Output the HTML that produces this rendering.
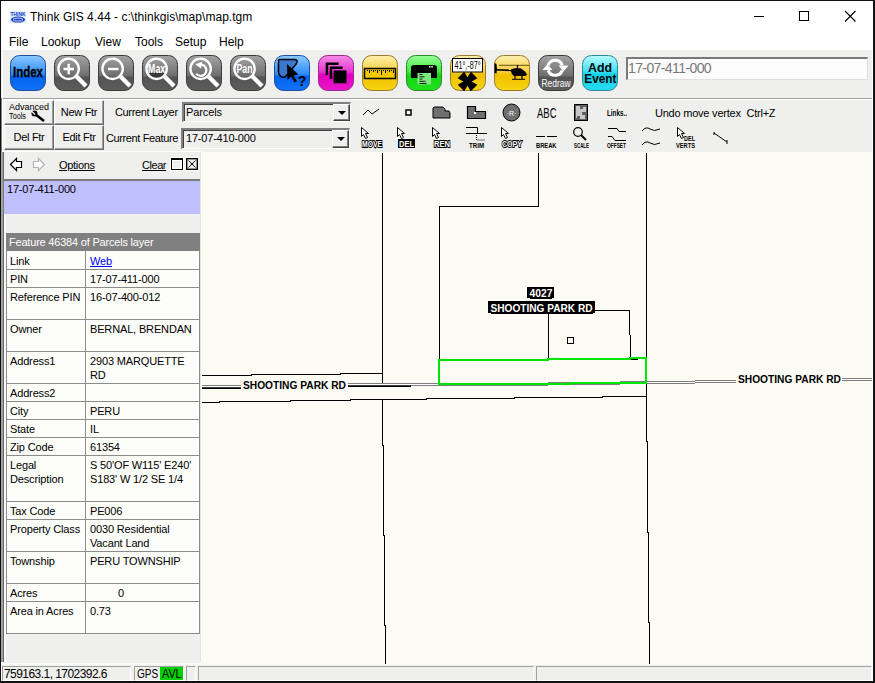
<!DOCTYPE html>
<html><head><meta charset="utf-8">
<style>
*{margin:0;padding:0;box-sizing:border-box}
html,body{width:875px;height:683px;overflow:hidden;background:#fff;font-family:"Liberation Sans",sans-serif;color:#000}
.a{position:absolute}
.t{position:absolute;white-space:nowrap;font-size:12px;line-height:14px}
.s{position:absolute;white-space:nowrap;font-size:11px;line-height:14px}
.btn{position:absolute;background:#eff0ee;border-top:1px solid #fff;border-left:1px solid #fff;border-right:1px solid #696969;border-bottom:1px solid #696969;box-shadow:inset -1px -1px 0 #a0a0a0;font-size:11px;line-height:14px;text-align:center;white-space:nowrap}
.combo{position:absolute;background:#eff0ee;border-top:2px solid #808080;border-left:2px solid #808080;border-right:1px solid #fff;border-bottom:1px solid #fff;box-shadow:inset 1px 1px 0 #404040}
.dd{position:absolute;right:0px;top:0px;width:17px;bottom:0px;background:#eff0ee;border-top:1px solid #fff;border-left:1px solid #fff;border-right:1px solid #404040;border-bottom:1px solid #404040;box-shadow:inset -1px -1px 0 #808080}
.dd:after{content:"";position:absolute;left:4px;top:6px;border-left:4px solid transparent;border-right:4px solid transparent;border-top:4px solid #000}
.tb{position:absolute;left:6px;top:233px;width:194px;border-collapse:collapse;font-size:11px;line-height:14px;background:#fdfdf9}
.tb td{border:1px solid #8c8c8c;vertical-align:top;padding:2px 0 0 3px;white-space:nowrap}
.tb td.c1{width:79px}
.ico{position:absolute}
</style></head><body>
<!-- window frame -->
<div class="a" style="left:0;top:0;width:875px;height:683px;background:#fff"></div>
<div class="a" style="left:0;top:0;width:875px;height:1px;background:#111"></div>
<div class="a" style="left:0;top:0;width:1px;height:683px;background:#111"></div>
<div class="a" style="left:873px;top:0;width:2px;height:683px;background:#111"></div>
<div class="a" style="left:0;top:681px;width:875px;height:2px;background:#111"></div>
<!-- title -->
<svg class="a" style="left:10px;top:11px" width="16" height="12"><rect width="16" height="12" fill="#d8ecfa"/><text x="8" y="5" font-family="Liberation Sans" font-weight="bold" font-size="5.5" text-anchor="middle" fill="#1a3cc8" textLength="15" lengthAdjust="spacingAndGlyphs">THINK</text><ellipse cx="8" cy="8.6" rx="7" ry="3" fill="#1a3cc8"/><ellipse cx="8" cy="8.6" rx="5" ry="1.5" fill="none" stroke="#fff" stroke-width="0.8"/></svg>
<div class="t" style="left:30px;top:10px;letter-spacing:0.04px">Think GIS 4.44 - c:\thinkgis\map\map.tgm</div>
<div class="a" style="left:754px;top:16px;width:10px;height:1px;background:#000"></div>
<div class="a" style="left:799px;top:11px;width:10px;height:10px;border:1px solid #000"></div>
<svg class="a" style="left:844px;top:10px" width="13" height="13"><path d="M1 1L11.5 11.5M11.5 1L1 11.5" stroke="#000" stroke-width="1.1"/></svg>
<!-- menu -->
<div class="t" style="left:9px;top:35px">File</div>
<div class="t" style="left:41px;top:35px">Lookup</div>
<div class="t" style="left:95px;top:35px">View</div>
<div class="t" style="left:135px;top:35px">Tools</div>
<div class="t" style="left:175px;top:35px">Setup</div>
<div class="t" style="left:219px;top:35px">Help</div>
<!-- toolbar bg -->
<div class="a" style="left:1px;top:50px;width:872px;height:48px;background:#eff0ee"></div>
<div class="a" style="left:1px;top:98px;width:872px;height:1px;background:#a0a0a0"></div>
<div class="a" style="left:1px;top:99px;width:872px;height:1px;background:#fff"></div>
<div class="a" style="left:1px;top:100px;width:872px;height:52px;background:#eff0ee"></div>
<div class="a" style="left:1px;top:98px;width:1px;height:54px;background:#808080"></div><div class="a" style="left:2px;top:50px;width:1px;height:100px;background:#fff"></div>
<!-- search box -->
<div class="a" style="left:626px;top:57px;width:242px;height:23px;background:#fcfcfc;border-top:2px solid #7a7a7a;border-left:2px solid #7a7a7a;border-bottom:1px solid #e0e0e0;border-right:1px solid #e0e0e0"></div>
<div class="a" style="left:628px;top:60px;font-size:14px;line-height:16px;color:#787878;white-space:nowrap;letter-spacing:-0.6px">17-07-411-000</div>
<svg class="a" style="left:0;top:0" width="875" height="100"><defs><linearGradient id="gg" x1="0" y1="0" x2="0" y2="1"><stop offset="0" stop-color="#a4a4a4"/><stop offset="0.58" stop-color="#6e6e6e"/><stop offset="0.62" stop-color="#545454"/><stop offset="1" stop-color="#5c5c5c"/></linearGradient><linearGradient id="gb" x1="0" y1="0" x2="0" y2="1"><stop offset="0" stop-color="#8ccaff"/><stop offset="0.55" stop-color="#2a88f8"/><stop offset="0.6" stop-color="#0062ee"/><stop offset="1" stop-color="#1272f8"/></linearGradient><linearGradient id="gm" x1="0" y1="0" x2="0" y2="1"><stop offset="0" stop-color="#f88ae8"/><stop offset="0.45" stop-color="#e838d0"/><stop offset="0.55" stop-color="#e000c0"/><stop offset="1" stop-color="#e818c8"/></linearGradient><linearGradient id="gy" x1="0" y1="0" x2="0" y2="1"><stop offset="0" stop-color="#fff0b0"/><stop offset="0.45" stop-color="#f8d040"/><stop offset="0.55" stop-color="#f0c000"/><stop offset="1" stop-color="#f8d410"/></linearGradient><linearGradient id="gr" x1="0" y1="0" x2="0" y2="1"><stop offset="0" stop-color="#98ff98"/><stop offset="0.45" stop-color="#40ee40"/><stop offset="0.55" stop-color="#10d810"/><stop offset="1" stop-color="#20e020"/></linearGradient><linearGradient id="gc" x1="0" y1="0" x2="0" y2="1"><stop offset="0" stop-color="#b8fcff"/><stop offset="0.45" stop-color="#40e0f4"/><stop offset="0.55" stop-color="#10d0e8"/><stop offset="1" stop-color="#28dcf0"/></linearGradient></defs><g transform="translate(10,55)"><rect x="0.5" y="0.5" width="35" height="35" rx="9" fill="url(#gb)" stroke="#1a4fa0"/><text x="18" y="21.8" font-family="Liberation Sans" font-weight="bold" font-size="14.5" text-anchor="middle" textLength="30" lengthAdjust="spacingAndGlyphs" stroke="#000" stroke-width="0.35">Index</text></g><g transform="translate(54,55)"><rect x="0.5" y="0.5" width="35" height="35" rx="9" fill="url(#gg)" stroke="#3a3a3a"/><circle cx="14.6" cy="13.8" r="10.2" fill="none" stroke="#fff" stroke-width="2.3"/><line x1="22.3" y1="21.3" x2="32" y2="31" stroke="#fff" stroke-width="4.3"/><path d="M9.5 14h10.5M14.7 8.7v10.5" stroke="#fff" stroke-width="2.4"/></g><g transform="translate(98,55)"><rect x="0.5" y="0.5" width="35" height="35" rx="9" fill="url(#gg)" stroke="#3a3a3a"/><circle cx="14.6" cy="13.8" r="10.2" fill="none" stroke="#fff" stroke-width="2.3"/><line x1="22.3" y1="21.3" x2="32" y2="31" stroke="#fff" stroke-width="4.3"/><path d="M10 14h10.5" stroke="#fff" stroke-width="2.4"/></g><g transform="translate(142,55)"><rect x="0.5" y="0.5" width="35" height="35" rx="9" fill="url(#gg)" stroke="#3a3a3a"/><path d="M6.2 17.5 A9 9 0 0 0 23 17.5 Z" fill="#3a3a3a"/><circle cx="14.6" cy="13.8" r="10.2" fill="none" stroke="#fff" stroke-width="2.3"/><line x1="22.3" y1="21.3" x2="32" y2="31" stroke="#fff" stroke-width="4.3"/><text x="14.6" y="18.3" fill="#fff" font-family="Liberation Sans" font-weight="bold" font-size="12" text-anchor="middle" textLength="17" lengthAdjust="spacingAndGlyphs">Max</text></g><g transform="translate(186,55)"><rect x="0.5" y="0.5" width="35" height="35" rx="9" fill="url(#gg)" stroke="#3a3a3a"/><circle cx="14.6" cy="13.8" r="10.2" fill="none" stroke="#fff" stroke-width="2.3"/><line x1="22.3" y1="21.3" x2="32" y2="31" stroke="#fff" stroke-width="4.3"/><path d="M14.5 9.7 A5.6 5.6 0 1 1 10.2 18.6" fill="none" stroke="#fff" stroke-width="2.2"/><path d="M9.3 9.2 L16.2 6.8 L15 13.4 Z" fill="#fff"/></g><g transform="translate(230,55)"><rect x="0.5" y="0.5" width="35" height="35" rx="9" fill="url(#gg)" stroke="#3a3a3a"/><circle cx="14.6" cy="13.8" r="10.2" fill="none" stroke="#fff" stroke-width="2.3"/><line x1="22.3" y1="21.3" x2="32" y2="31" stroke="#fff" stroke-width="4.3"/><text x="14.5" y="18.3" fill="#fff" font-family="Liberation Sans" font-weight="bold" font-size="12" text-anchor="middle" textLength="16" lengthAdjust="spacingAndGlyphs">Pan</text></g><g transform="translate(274,55)"><rect x="0.5" y="0.5" width="35" height="35" rx="9" fill="url(#gb)" stroke="#1a4fa0"/><path d="M6 4.5 H20 Q24.5 4.5 22.5 8.5 L13 20 Q10 23.5 7 21.5 Q4.5 20 4.5 17 V6 Q4.5 4.5 6 4.5 Z" fill="#3a78d0" stroke="#000" stroke-width="1.5"/><path d="M13 9 L13.5 25 L17 21.5 L20.5 27.5 L23 26.3 L19.5 20.5 L24.5 19.5 Z" fill="#000"/><text x="28" y="31" font-family="Liberation Sans" font-weight="bold" font-size="14" text-anchor="middle">?</text></g><g transform="translate(318,55)"><rect x="0.5" y="0.5" width="35" height="35" rx="9" fill="url(#gm)" stroke="#a02890"/><path d="M7.7 7.5H20.6V10H10.2V20H7.7Z" fill="#000"/><path d="M11.7 11.5H24.6V14H14.2V24H11.7Z" fill="#000"/><rect x="15.6" y="15.4" width="12.9" height="12.9" fill="#000"/></g><g transform="translate(362,55)"><rect x="0.5" y="0.5" width="35" height="35" rx="9" fill="url(#gy)" stroke="#9a7a30"/><rect x="2.5" y="13.5" width="31" height="10" fill="#f4c800" stroke="#000" stroke-width="1.5"/><path d="M5.5 15v1M7.5 15v3M9.5 15v1M11.5 15v2M13.5 15v1M15.5 15v3M17.5 15v1M19.5 15v5M21.5 15v1M23.5 15v3M25.5 15v1M27.5 15v2M29.5 15v1M31.5 15v3" stroke="#000" stroke-width="1"/></g><g transform="translate(406,55)"><rect x="0.5" y="0.5" width="35" height="35" rx="9" fill="url(#gr)" stroke="#2a8a2a"/><path d="M8 10h20q3 0 3 3v10H5V13q0-3 3-3z" fill="#000"/><rect x="11.5" y="18" width="13.5" height="11.5" fill="#80e880"/><path d="M13.5 19.5h3M13.5 21.8h5M13.5 24h3M13.5 26.3h6M13.5 28.5h7" stroke="#000" stroke-width="0.9"/><rect x="23" y="11" width="1.5" height="1.5" fill="#fff"/><rect x="25.3" y="11" width="1.5" height="1.5" fill="#fff"/></g><g transform="translate(450,55)"><rect x="0.5" y="0.5" width="35" height="35" rx="9" fill="url(#gy)" stroke="#9a7a30"/><rect x="2.5" y="3.5" width="30" height="13.5" fill="#fff" stroke="#000" stroke-width="1"/><text x="17.5" y="14" font-family="Liberation Sans" font-size="11" text-anchor="middle" textLength="26" lengthAdjust="spacingAndGlyphs">41°,-87°</text><path d="M19.1 24.9 L14.2 16.7 L7.7 23.2 L15.9 28.1Z" fill="#000"/><path d="M19.1 28.1 L27.3 23.2 L20.8 16.7 L15.9 24.9Z" fill="#000"/><path d="M15.9 28.1 L20.8 36.3 L27.3 29.8 L19.1 24.9Z" fill="#000"/><path d="M15.9 24.9 L7.7 29.8 L14.2 36.3 L19.1 28.1Z" fill="#000"/><rect x="15.0" y="24.0" width="5" height="5" fill="#000"/></g><g transform="translate(494,55)"><rect x="0.5" y="0.5" width="35" height="35" rx="9" fill="url(#gy)" stroke="#9a7a30"/><path d="M0.5 8 L2.5 9 L3 14 L2.5 18.5 L0.5 18 Z" fill="#000"/><path d="M2 14 L17 14.6 L17 16.2 L2 15.6 Z" fill="#000"/><path d="M17 14.5 Q19 13 23 13 L27 13.5 L31 16.5 L33 19.5 L31.5 21 L20 21 Q17 19 17 16 Z" fill="#000"/><path d="M5 10.3 H35" stroke="#3a3000" stroke-width="0.8"/><path d="M23.5 10 V13.5 M21 21 V24 M28 21 V24" stroke="#000" stroke-width="1.2"/><path d="M18 24.3 H31" stroke="#000" stroke-width="1"/></g><g transform="translate(538,55)"><rect x="0.5" y="0.5" width="35" height="35" rx="9" fill="url(#gg)" stroke="#3a3a3a"/><path d="M10.15 10.23 A7.5 7.5 0 0 1 24.25 10.23" fill="none" stroke="#fff" stroke-width="3"/><path d="M20.5 10.5 L30.5 10.5 L25.5 16.5 Z" fill="#fff"/><path d="M24.25 15.37 A7.5 7.5 0 0 1 10.15 15.37" fill="none" stroke="#fff" stroke-width="3"/><path d="M4.5 15 L14.5 15 L9.5 9 Z" fill="#fff"/><text x="18" y="31.8" fill="#fff" font-family="Liberation Sans" font-size="10" text-anchor="middle" textLength="29" lengthAdjust="spacingAndGlyphs">Redraw</text></g><g transform="translate(582,55)"><rect x="0.5" y="0.5" width="35" height="35" rx="9" fill="url(#gc)" stroke="#2a8a9a"/><text x="18" y="17" font-family="Liberation Sans" font-weight="bold" font-size="13" text-anchor="middle" textLength="24" lengthAdjust="spacingAndGlyphs">Add</text><text x="18.3" y="28.3" font-family="Liberation Sans" font-weight="bold" font-size="13" text-anchor="middle" textLength="32" lengthAdjust="spacingAndGlyphs">Event</text></g></svg>
<!-- second toolbar -->
<div class="btn" style="left:4px;top:100px;width:50px;height:25px"></div>
<svg class="a" style="left:8px;top:102px" width="44" height="20"><text x="1" y="8" font-family="Liberation Sans" font-size="8.5" textLength="40" lengthAdjust="spacingAndGlyphs">Advanced</text><text x="1" y="17" font-family="Liberation Sans" font-size="8.5" textLength="17" lengthAdjust="spacingAndGlyphs">Tools</text><path d="M27 12 L36 19" stroke="#000" stroke-width="2.6"/><circle cx="26.5" cy="11.5" r="3" fill="#000"/><path d="M24 9.5 L27 12.5" stroke="#eff0ee" stroke-width="1.4"/></svg>
<div class="btn" style="left:54px;top:100px;width:50px;height:25px;padding-top:4px;letter-spacing:-0.3px">New Ftr</div>
<div class="btn" style="left:4px;top:125px;width:50px;height:25px;padding-top:4px;letter-spacing:-0.3px">Del Ftr</div>
<div class="btn" style="left:54px;top:125px;width:50px;height:25px;padding-top:4px;letter-spacing:-0.3px">Edit Ftr</div>
<div class="s" style="left:115px;top:105px;letter-spacing:-0.35px">Current Layer</div>
<div class="s" style="left:106px;top:131px;letter-spacing:-0.38px">Current Feature</div>
<div class="combo" style="left:182px;top:102px;width:169px;height:20px"><div class="s" style="left:2px;top:1px;font-size:11px;letter-spacing:-0.1px">Parcels</div><div class="dd"></div></div>
<div class="combo" style="left:181px;top:128px;width:169px;height:21px"><div class="s" style="left:3px;top:1px;font-size:11px;letter-spacing:-0.2px">17-07-410-000</div><div class="dd"></div></div>
<div class="a" style="left:2px;top:151px;width:199px;height:1px;background:#fff"></div>
<svg class="a" style="left:0;top:0" width="875" height="152"><path d="M363 115 L368 110 L372 114 L379 109" fill="none" stroke="#000" stroke-width="1"/><rect x="406" y="110" width="5" height="5" fill="#fff" stroke="#000" stroke-width="1.5"/><path d="M433 108 L434 107 H443 L445 109 V111 H449 L450 113 V118 H433 Z" fill="#6f6f6f" stroke="#000" stroke-width="1"/><path d="M467.5 106.5 H475.5 V111.5 H485.5 V118.5 H467.5 Z" fill="#6f6f6f" stroke="#000" stroke-width="1.2"/><rect x="474" y="112" width="2" height="2" fill="#fff"/><circle cx="511.5" cy="112.5" r="8.5" fill="#6f6f6f" stroke="#000" stroke-width="1"/><text x="511.5" y="115.5" font-family="Liberation Sans" font-size="7" fill="#fff" text-anchor="middle">·R·</text><text x="537" y="118" font-family="Liberation Sans" font-size="14" textLength="19.5" lengthAdjust="spacingAndGlyphs">ABC</text><rect x="574.5" y="104.5" width="13" height="16" fill="#606060" stroke="#000" stroke-width="1"/><path d="M576 106h4v3h3v-2h3v5h-4v3h3v4h-5v-3h-3v2h-1z" fill="#c8c8c8"/><text x="607" y="115.5" font-family="Liberation Sans" font-weight="bold" font-size="8.5" textLength="20" lengthAdjust="spacingAndGlyphs">Links..</text><path d="M361.5 127.5 V136.5 L363.5 134.5 L365.5 138.5 L367.5 137.5 L365.5 133.5 H368.5 Z" fill="#fff" stroke="#000" stroke-width="1"/><path d="M397.5 127.5 V136.5 L399.5 134.5 L401.5 138.5 L403.5 137.5 L401.5 133.5 H404.5 Z" fill="#fff" stroke="#000" stroke-width="1"/><path d="M432.5 127.5 V136.5 L434.5 134.5 L436.5 138.5 L438.5 137.5 L436.5 133.5 H439.5 Z" fill="#fff" stroke="#000" stroke-width="1"/><path d="M501.5 127.5 V136.5 L503.5 134.5 L505.5 138.5 L507.5 137.5 L505.5 133.5 H508.5 Z" fill="#fff" stroke="#000" stroke-width="1"/><path d="M677.5 127.5 V136.5 L679.5 134.5 L681.5 138.5 L683.5 137.5 L681.5 133.5 H684.5 Z" fill="#fff" stroke="#000" stroke-width="1"/><text x="362" y="146.8" font-family="Liberation Sans" font-weight="bold" font-size="9.5" fill="#fff" stroke="#000" stroke-width="2" paint-order="stroke" textLength="20" lengthAdjust="spacingAndGlyphs">MOVE</text><rect x="398" y="139" width="17" height="9" fill="#000"/><text x="399" y="147.3" font-family="Liberation Sans" font-weight="bold" font-size="9" fill="#fff" textLength="15" lengthAdjust="spacingAndGlyphs">DEL</text><text x="434" y="146.8" font-family="Liberation Sans" font-weight="bold" font-size="9.5" fill="#fff" stroke="#000" stroke-width="2" paint-order="stroke" textLength="16" lengthAdjust="spacingAndGlyphs">REN</text><text x="502" y="146.8" font-family="Liberation Sans" font-weight="bold" font-size="9.5" fill="#fff" stroke="#000" stroke-width="2" paint-order="stroke" textLength="20" lengthAdjust="spacingAndGlyphs">COPY</text><path d="M466 127.5 H477.5 V133 M466 133.5 H487" fill="none" stroke="#000" stroke-width="1"/><path d="M476.5 135 V140 H485" fill="none" stroke="#000" stroke-width="1" stroke-dasharray="1 1"/><text x="469" y="147.5" font-family="Liberation Sans" font-weight="bold" font-size="7.3" textLength="15" lengthAdjust="spacingAndGlyphs">TRIM</text><path d="M536 136.5 H545 M547 136.5 H557" stroke="#000" stroke-width="1.2"/><text x="536" y="147.5" font-family="Liberation Sans" font-weight="bold" font-size="7.3" textLength="20.5" lengthAdjust="spacingAndGlyphs">BREAK</text><circle cx="578" cy="132" r="4.3" fill="none" stroke="#000" stroke-width="1.2"/><path d="M581 135 L586 140" stroke="#000" stroke-width="2"/><text x="574" y="147.5" font-family="Liberation Sans" font-weight="bold" font-size="7.3" textLength="15" lengthAdjust="spacingAndGlyphs">SCALE</text><path d="M608 128.5 H617 L619 131.5 H626 M608 136.5 H612 L615 140.5 H626" fill="none" stroke="#000" stroke-width="1"/><text x="607" y="147.5" font-family="Liberation Sans" font-weight="bold" font-size="7.3" textLength="19" lengthAdjust="spacingAndGlyphs">OFFSET</text><path d="M642 131 Q646 126 650 129 Q654 132 660 129 M642 145 Q646 140 650 143 Q654 146 660 143" fill="none" stroke="#000" stroke-width="1"/><text x="684" y="141" font-family="Liberation Sans" font-weight="bold" font-size="7.3" textLength="11" lengthAdjust="spacingAndGlyphs">DEL</text><text x="676" y="147.5" font-family="Liberation Sans" font-weight="bold" font-size="7.3" textLength="19" lengthAdjust="spacingAndGlyphs">VERTS</text><path d="M714 133 L727 142 M714 132v3 M727 140v4" fill="none" stroke="#000" stroke-width="1"/></svg>
<div class="s" style="left:655px;top:106px;letter-spacing:-0.22px">Undo move vertex&nbsp; Ctrl+Z</div>
<!-- left panel -->
<div class="a" style="left:2px;top:152px;width:200px;height:511px;background:#eff0ee"></div>
<div class="a" style="left:1px;top:152px;width:2px;height:510px;background:#a0a0a0"></div><div class="a" style="left:3px;top:152px;width:1px;height:510px;background:#696969"></div><div class="a" style="left:4px;top:215px;width:2px;height:447px;background:#fafafa"></div>
<svg class="a" style="left:9px;top:157px" width="40" height="16"><path d="M1.5 7.5 L7.5 1.5 V4.5 H12.5 V10.5 H7.5 V13.5 Z" fill="#fff" stroke="#000" stroke-width="1.2"/><path d="M35.5 7.5 L29.5 1.5 V4.5 H24.5 V10.5 H29.5 V13.5 Z" fill="#fff" stroke="#b4b4b4" stroke-width="1.2"/></svg>
<div class="s" style="left:59px;top:158px;font-size:11px;text-decoration:underline;letter-spacing:-0.3px">Options</div>
<div class="s" style="left:142px;top:158px;font-size:11px;text-decoration:underline;letter-spacing:-0.45px">Clear</div>
<div class="a" style="left:171px;top:158px;width:12px;height:12px;border:1px solid #000;border-top:2px solid #000;background:#eff0ee;box-shadow:0 0 0 1px #fff, inset 0 0 0 1px #fff"></div>
<svg class="a" style="left:185px;top:157px" width="14" height="14"><rect x="0.5" y="0.5" width="13" height="13" fill="none" stroke="#fff"/><rect x="1.7" y="1.7" width="10.6" height="10.6" fill="#eff0ee" stroke="#000" stroke-width="1.4"/><path d="M3.5 3.5L10.5 10.5M10.5 3.5L3.5 10.5" stroke="#000" stroke-width="0.9"/><circle cx="7" cy="7" r="1" fill="#000"/></svg>
<div class="a" style="left:3px;top:179px;width:198px;height:35px;background:#c0c0ff;border-top:2px solid #7a7a7a;border-left:1px solid #7a7a7a"></div>
<div class="s" style="left:7px;top:182px;font-size:11px;letter-spacing:-0.2px">17-07-411-000</div>
<div class="a" style="left:6px;top:233px;width:194px;height:18px;background:#808080"></div>
<div class="s" style="left:9px;top:235px;font-size:11px;color:#fff;letter-spacing:-0.2px">Feature 46384 of Parcels layer</div>
<div class="a" style="left:6px;top:251px;width:194px;height:383px;background:#fdfdf9"></div>
<div class="a" style="left:6px;top:269px;width:194px;height:1px;background:#8c8c8c"></div>
<div class="s" style="left:10px;top:254px;letter-spacing:-0.15px">Link</div>
<div class="s" style="left:90px;top:254px;letter-spacing:-0.15px"><u style="color:#0000ee">Web</u></div>
<div class="a" style="left:6px;top:287px;width:194px;height:1px;background:#8c8c8c"></div>
<div class="s" style="left:10px;top:272px;letter-spacing:-0.15px">PIN</div>
<div class="s" style="left:90px;top:272px;letter-spacing:-0.15px">17-07-411-000</div>
<div class="a" style="left:6px;top:319px;width:194px;height:1px;background:#8c8c8c"></div>
<div class="s" style="left:10px;top:290px;letter-spacing:-0.15px">Reference PIN</div>
<div class="s" style="left:90px;top:290px;letter-spacing:-0.15px">16-07-400-012</div>
<div class="a" style="left:6px;top:351px;width:194px;height:1px;background:#8c8c8c"></div>
<div class="s" style="left:10px;top:322px;letter-spacing:-0.15px">Owner</div>
<div class="s" style="left:90px;top:322px;letter-spacing:-0.15px">BERNAL, BRENDAN</div>
<div class="a" style="left:6px;top:383px;width:194px;height:1px;background:#8c8c8c"></div>
<div class="s" style="left:10px;top:354px;letter-spacing:-0.15px">Address1</div>
<div class="s" style="left:90px;top:354px;letter-spacing:-0.15px">2903 MARQUETTE</div>
<div class="s" style="left:90px;top:368px;letter-spacing:-0.15px">RD</div>
<div class="a" style="left:6px;top:401px;width:194px;height:1px;background:#8c8c8c"></div>
<div class="s" style="left:10px;top:386px;letter-spacing:-0.15px">Address2</div>
<div class="a" style="left:6px;top:419px;width:194px;height:1px;background:#8c8c8c"></div>
<div class="s" style="left:10px;top:404px;letter-spacing:-0.15px">City</div>
<div class="s" style="left:90px;top:404px;letter-spacing:-0.15px">PERU</div>
<div class="a" style="left:6px;top:437px;width:194px;height:1px;background:#8c8c8c"></div>
<div class="s" style="left:10px;top:422px;letter-spacing:-0.15px">State</div>
<div class="s" style="left:90px;top:422px;letter-spacing:-0.15px">IL</div>
<div class="a" style="left:6px;top:455px;width:194px;height:1px;background:#8c8c8c"></div>
<div class="s" style="left:10px;top:440px;letter-spacing:-0.15px">Zip Code</div>
<div class="s" style="left:90px;top:440px;letter-spacing:-0.15px">61354</div>
<div class="a" style="left:6px;top:501px;width:194px;height:1px;background:#8c8c8c"></div>
<div class="s" style="left:10px;top:458px;letter-spacing:-0.15px">Legal</div>
<div class="s" style="left:10px;top:472px;letter-spacing:-0.15px">Description</div>
<div class="s" style="left:90px;top:458px;letter-spacing:-0.15px">S 50'OF W115' E240'</div>
<div class="s" style="left:90px;top:472px;letter-spacing:-0.15px">S183' W 1/2 SE 1/4</div>
<div class="a" style="left:6px;top:519px;width:194px;height:1px;background:#8c8c8c"></div>
<div class="s" style="left:10px;top:504px;letter-spacing:-0.15px">Tax Code</div>
<div class="s" style="left:90px;top:504px;letter-spacing:-0.15px">PE006</div>
<div class="a" style="left:6px;top:551px;width:194px;height:1px;background:#8c8c8c"></div>
<div class="s" style="left:10px;top:522px;letter-spacing:-0.15px">Property Class</div>
<div class="s" style="left:90px;top:522px;letter-spacing:-0.15px">0030 Residential</div>
<div class="s" style="left:90px;top:536px;letter-spacing:-0.15px">Vacant Land</div>
<div class="a" style="left:6px;top:583px;width:194px;height:1px;background:#8c8c8c"></div>
<div class="s" style="left:10px;top:554px;letter-spacing:-0.15px">Township</div>
<div class="s" style="left:90px;top:554px;letter-spacing:-0.15px">PERU TOWNSHIP</div>
<div class="a" style="left:6px;top:601px;width:194px;height:1px;background:#8c8c8c"></div>
<div class="s" style="left:10px;top:586px;letter-spacing:-0.15px">Acres</div>
<div class="s" style="left:90px;top:586px;letter-spacing:-0.15px"><span style="padding-left:28px">0</span></div>
<div class="a" style="left:6px;top:633px;width:194px;height:1px;background:#8c8c8c"></div>
<div class="s" style="left:10px;top:604px;letter-spacing:-0.15px">Area in Acres</div>
<div class="s" style="left:90px;top:604px;letter-spacing:-0.15px">0.73</div>
<div class="a" style="left:6px;top:251px;width:1px;height:383px;background:#8c8c8c"></div>
<div class="a" style="left:85px;top:251px;width:1px;height:383px;background:#8c8c8c"></div>
<div class="a" style="left:199px;top:251px;width:1px;height:383px;background:#8c8c8c"></div>
<!-- map -->
<div class="a" style="left:200px;top:152px;width:1px;height:510px;background:#e4e4e4"></div><div class="a" style="left:201px;top:152px;width:1px;height:510px;background:#fdfdfa"></div>
<div class="a" style="left:202px;top:152px;width:670px;height:512px;background:#fcfcf4"></div>
<svg class="a" style="left:0;top:0" width="875" height="683" shape-rendering="crispEdges"><line x1="382.5" y1="153" x2="382.5" y2="383" stroke="#000" stroke-width="1"/><polyline points="382.5,399 382.5,445 383.5,445 383.5,535 384.5,535 384.5,625 385.5,625 385.5,664" fill="none" stroke="#000" stroke-width="1"/><line x1="538.5" y1="153" x2="538.5" y2="206.5" stroke="#000" stroke-width="1"/><line x1="439" y1="206.5" x2="539" y2="206.5" stroke="#000" stroke-width="1"/><line x1="439.5" y1="206" x2="439.5" y2="360" stroke="#000" stroke-width="1"/><line x1="646.5" y1="153" x2="646.5" y2="384" stroke="#000" stroke-width="1"/><polyline points="646.5,384 646.5,441 647.5,441 647.5,532 648.5,532 648.5,622 649.5,622 649.5,664" fill="none" stroke="#000" stroke-width="1"/><line x1="548.5" y1="312" x2="548.5" y2="359" stroke="#000" stroke-width="1"/><line x1="548" y1="310.5" x2="630" y2="310.5" stroke="#000" stroke-width="1"/><line x1="629.5" y1="310" x2="629.5" y2="335" stroke="#000" stroke-width="1"/><line x1="630.5" y1="335" x2="630.5" y2="359" stroke="#000" stroke-width="1"/><line x1="631" y1="359.5" x2="638" y2="359.5" stroke="#000" stroke-width="1"/><rect x="567.5" y="337.5" width="6" height="6" fill="none" stroke="#000"/><polyline points="202,375.5 251,375.5 251,374.5 340,374.5 340,373.5 383,373.5" fill="none" stroke="#000" stroke-width="1"/><polyline points="202,402.5 219,402.5 219,401.5 290,401.5 290,400.5 350,400.5 350,399.5 426,399.5 426,398.5 514,398.5 514,397.5 602,397.5 602,396.5 647,396.5" fill="none" stroke="#000" stroke-width="1"/><rect x="202" y="385" width="39" height="1" fill="#808080"/><rect x="202" y="386" width="39" height="1" fill="#ffffff"/><rect x="202" y="387" width="39" height="1" fill="#404040"/><rect x="202" y="388" width="39" height="1" fill="#000"/><rect x="348" y="383" width="63" height="1" fill="#808080"/><rect x="348" y="384" width="63" height="1" fill="#ffffff"/><rect x="348" y="385" width="63" height="1" fill="#404040"/><rect x="348" y="386" width="63" height="1" fill="#000"/><rect x="411" y="383" width="27" height="1" fill="#808080"/><rect x="411" y="384" width="27" height="1" fill="#ffffff"/><rect x="411" y="385" width="27" height="1" fill="#808080"/><rect x="438" y="383" width="110" height="1" fill="#808080"/><rect x="438" y="384" width="110" height="1" fill="#ffffff"/><rect x="438" y="385" width="110" height="1" fill="#808080"/><rect x="548" y="382" width="72" height="1" fill="#808080"/><rect x="548" y="383" width="72" height="1" fill="#ffffff"/><rect x="548" y="384" width="72" height="1" fill="#808080"/><rect x="620" y="381" width="26" height="1" fill="#808080"/><rect x="620" y="382" width="26" height="1" fill="#ffffff"/><rect x="620" y="383" width="26" height="1" fill="#808080"/><rect x="646" y="381" width="49" height="1" fill="#808080"/><rect x="646" y="382" width="49" height="1" fill="#ffffff"/><rect x="646" y="383" width="49" height="1" fill="#808080"/><rect x="695" y="380" width="41" height="1" fill="#808080"/><rect x="695" y="381" width="41" height="1" fill="#ffffff"/><rect x="695" y="382" width="41" height="1" fill="#808080"/><rect x="842" y="378" width="31" height="1" fill="#808080"/><rect x="842" y="379" width="31" height="1" fill="#ffffff"/><rect x="842" y="380" width="31" height="1" fill="#808080"/><polyline points="438,360 548,360 548,359.2 630,359.2 630,358 647,358" fill="none" stroke="#00e600" stroke-width="2"/><polyline points="439,359 439,385" fill="none" stroke="#00e600" stroke-width="2"/><polyline points="645.5,357 645.5,384" fill="none" stroke="#00e600" stroke-width="2"/><polyline points="438,384 571,384 571,383.3 620,383.3 620,383 647,383" fill="none" stroke="#00e600" stroke-width="2"/>
<g font-family="Liberation Sans" font-weight="bold" font-size="11">
<rect x="242" y="378" width="106" height="13" fill="#fcfcf4"/><rect x="737" y="372" width="105" height="13" fill="#fcfcf4"/>
<text x="243" y="389" textLength="103" lengthAdjust="spacingAndGlyphs" fill="#000" stroke="#fcfcf4" stroke-width="2" paint-order="stroke">SHOOTING PARK RD</text>
<text x="738" y="383" textLength="103" lengthAdjust="spacingAndGlyphs" fill="#000" stroke="#fcfcf4" stroke-width="2" paint-order="stroke">SHOOTING PARK RD</text>
<rect x="488" y="300.5" width="107" height="13" rx="2.5" fill="#000"/>
<rect x="527" y="286.5" width="27" height="12" rx="2.5" fill="#000"/>
<text x="490.5" y="311.5" textLength="102" lengthAdjust="spacingAndGlyphs" fill="#fff">SHOOTING PARK RD</text>
<text x="529.5" y="297" font-size="10.5" textLength="23" lengthAdjust="spacingAndGlyphs" fill="#fff">4027</text>
</g></svg>
<!-- status -->
<div class="a" style="left:2px;top:664px;width:870px;height:17px;background:#eff0ee"></div>
<div class="a" style="left:2px;top:663px;width:200px;height:2px;background:#fafafa"></div><div class="a" style="left:202px;top:664px;width:670px;height:1px;background:#fafafa"></div>
<div class="a" style="left:2px;top:680px;width:871px;height:1px;background:#fff"></div>
<div class="a" style="left:872px;top:50px;width:1px;height:631px;background:#fff"></div>
<div class="a" style="left:2px;top:666px;width:129px;height:15px;border-top:1px solid #a0a0a0;border-left:1px solid #a0a0a0;border-right:1px solid #fff;border-bottom:1px solid #fff"></div>
<div class="t" style="left:4px;top:667px;letter-spacing:-0.55px">759163.1, 1702392.6</div>
<div class="a" style="left:134px;top:666px;width:50px;height:15px;border-top:1px solid #a0a0a0;border-left:1px solid #a0a0a0;border-right:1px solid #fff;border-bottom:1px solid #fff"></div>
<div class="t" style="left:137px;top:667px;transform:scaleX(0.84);transform-origin:0 0">GPS</div>
<div class="a" style="left:160px;top:667px;width:23px;height:13px;background:#00d000"></div>
<div class="t" style="left:162px;top:667px;transform:scaleX(0.9);transform-origin:0 0">AVL</div>
<div class="a" style="left:186px;top:666px;width:10px;height:15px;border-top:1px solid #a0a0a0;border-left:1px solid #a0a0a0;border-right:1px solid #fff;border-bottom:1px solid #fff"></div>
<div class="a" style="left:198px;top:666px;width:336px;height:15px;border-top:1px solid #a0a0a0;border-left:1px solid #a0a0a0;border-right:1px solid #fff;border-bottom:1px solid #fff"></div>
<div class="a" style="left:536px;top:666px;width:336px;height:15px;border-top:1px solid #a0a0a0;border-left:1px solid #a0a0a0;border-right:1px solid #fff;border-bottom:1px solid #fff"></div>
</body></html>
